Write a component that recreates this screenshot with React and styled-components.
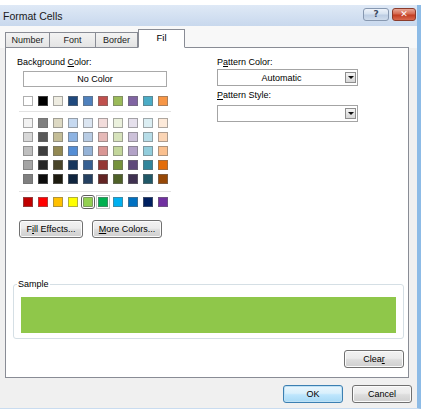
import React from "react";
import styled, { createGlobalStyle, css } from "styled-components";

const GlobalStyle = createGlobalStyle`
  html, body { margin: 0; padding: 0; background: #ffffff; }
  body { font-family: "Liberation Sans", Arial, sans-serif; font-size: 9px; color: #000; }
  * { box-sizing: border-box; }
`;

const Page = styled.div`
  width: 427px;
  height: 415px;
  padding-top: 5px;
  background: #ffffff;
  overflow: hidden;
`;

const Window = styled.div`
  width: 421px;
  background: #f0f0f0;
  border-right: 4px solid #8dbbe6;
  border-bottom: 1px solid #c9dcf0;
  display: flex;
  flex-direction: column;
`;

const TitleBar = styled.div`
  height: 21px;
  background: linear-gradient(#dfe9f6, #c8d8ed);
  display: flex;
  align-items: center;
  justify-content: space-between;
  padding: 0 1px 0 3px;
`;

const Title = styled.div`
  font-size: 10.5px;
  color: #1a1a1a;
`;

const CaptionButtons = styled.div`
  display: flex;
  gap: 3px;
  align-self: flex-start;
  margin-top: 3px;
`;

const CaptionButton = styled.div`
  height: 13px;
  width: ${(p) => p.$w}px;
  border-radius: 3px;
  display: flex;
  align-items: center;
  justify-content: center;
  font-family: "DejaVu Sans", sans-serif;
  font-weight: bold;
  font-size: 9px;
  line-height: 1;
  ${(p) =>
    p.$close
      ? css`
          background: linear-gradient(#e9a898 0%, #d5684f 45%, #c23d22 55%, #d9694e 100%);
          border: 1px solid #8a3b2b;
          color: #ffffff;
        `
      : css`
          background: linear-gradient(#eef3fa 0%, #d6e2f0 45%, #bccde3 55%, #cfdcec 100%);
          border: 1px solid #8798b0;
          color: #3a4a60;
        `}
`;

const Body = styled.div`
  padding: 3px 0 0 5px;
  display: flex;
  flex-direction: column;
  background: linear-gradient(#f8f8f8, #f8f8f8 22px, #f0f0f0 22px);
`;

const TabRow = styled.div`
  display: flex;
  align-items: flex-end;
  height: 19px;
  position: relative;
  z-index: 1;
  margin-bottom: -1px;
`;

const Tab = styled.div`
  width: ${(p) => p.$w}px;
  display: flex;
  align-items: center;
  justify-content: center;
  border: 1px solid #898c95;
  border-left-width: ${(p) => (p.$first || p.$active ? 1 : 0)}px;
  ${(p) =>
    p.$active
      ? css`
          height: 19px;
          background: #ffffff;
          border-bottom-color: #ffffff;
          font-size: 9.5px;
          padding-bottom: 3px;
        `
      : css`
          height: 16px;
          background: linear-gradient(#f3f3f3, #e4e4e4);
          color: #222;
        `}
`;

const Panel = styled.div`
  width: 404px;
  height: 331px;
  background: #ffffff;
  border: 1px solid #898c95;
  display: flex;
  flex-direction: column;
  padding: 8px 4px 8px 0;
`;

const Columns = styled.div`
  display: flex;
`;

const LeftCol = styled.div`
  width: 211px;
  padding-left: 11px;
  display: flex;
  flex-direction: column;
`;

const RightCol = styled.div`
  display: flex;
  flex-direction: column;
`;

const Label = styled.div`
  height: 12px;
  line-height: 12px;
  margin-top: ${(p) => p.$mt || 0}px;
  white-space: nowrap;
`;

const NoColorBox = styled.div`
  margin: 3px 0 0 6px;
  width: 144px;
  height: 16px;
  border: 1px solid #a9a9a9;
  display: flex;
  align-items: center;
  justify-content: center;
`;

const SwatchRow = styled.div`
  display: flex;
  gap: 5px;
  margin-left: 6px;
  margin-top: ${(p) => p.$mt || 0}px;
`;

const Swatch = styled.div`
  width: 10px;
  height: 10px;
  background: ${(p) => p.$c};
  border: 1px solid rgba(110, 110, 110, 0.55);
  ${(p) =>
    p.$selected &&
    css`
      outline: 1px solid #5e5e5e;
      outline-offset: 1px;
      border-radius: 1px;
    `}
  ${(p) =>
    p.$hover &&
    css`
      outline: 1px solid #c4c4c4;
      outline-offset: 1px;
    `}
`;

const Separator = styled.div`
  width: 152px;
  height: 1px;
  background: #e2e2e2;
  margin: ${(p) => p.$mt}px 0 0 2px;
`;

const ButtonRow = styled.div`
  display: flex;
  gap: 9px;
  margin: ${(p) => p.$mt || 0}px 0 0 ${(p) => p.$ml || 0}px;
  justify-content: ${(p) => p.$justify || "flex-start"};
`;

const Button = styled.div`
  width: ${(p) => p.$w}px;
  height: 18px;
  border-radius: 3px;
  display: flex;
  align-items: center;
  justify-content: center;
  white-space: nowrap;
  ${(p) =>
    p.$default
      ? css`
          border: 1px solid #3c7fb1;
          background: linear-gradient(#eaf6fd 0%, #d9f0fc 45%, #bee6fd 55%, #a7d9f5 100%);
          box-shadow: inset 0 0 0 1px #bfe1f5;
        `
      : css`
          border: 1px solid #707070;
          background: linear-gradient(#f2f2f2 0%, #ebebeb 45%, #dddddd 55%, #cfcfcf 100%);
          box-shadow: inset 0 0 0 1px #fbfbfb;
        `}
`;

const Combo = styled.div`
  width: 141px;
  height: 17px;
  margin-top: ${(p) => p.$mt || 0}px;
  border: 1px solid #a4a4a4;
  background: #ffffff;
  display: flex;
  align-items: center;
  padding: 0 1px 0 0;
`;

const ComboText = styled.div`
  flex: 1;
  text-align: center;
`;

const DropButton = styled.div`
  width: 11px;
  height: 11px;
  border: 1px solid #8e8e8e;
  background: linear-gradient(#f4f4f4, #d6d6d6);
  display: flex;
  align-items: center;
  justify-content: center;
`;

const Arrow = styled.div`
  width: 0;
  height: 0;
  border-left: 3px solid transparent;
  border-right: 3px solid transparent;
  border-top: 3px solid #111;
`;

const SampleGroup = styled.fieldset`
  margin: 40px 0 0 7px;
  width: 391px;
  padding: 7px 7px 5px 7px;
  border: 1px solid #d5dfe5;
  border-radius: 3px;
  min-width: 0;
`;

const Legend = styled.legend`
  padding: 0 1px;
  margin-left: -4px;
  line-height: 12px;
  font-size: 9px;
`;

const SampleFill = styled.div`
  height: 36px;
  background: ${(p) => p.$c};
`;

const Footer = styled.div`
  display: flex;
  justify-content: flex-end;
  gap: 9px;
  padding: 7px 5px 5px 0;
`;

const U = styled.span`
  text-decoration: underline;
  text-underline-offset: 1px;
`;

const theme = [
  ["#FFFFFF", "#000000", "#EEECE1", "#1F497D", "#4F81BD", "#C0504D", "#9BBB59", "#8064A2", "#4BACC6", "#F79646"],
];
const tints = [
  ["#F2F2F2", "#7F7F7F", "#DDD9C3", "#C6D9F0", "#DBE5F1", "#F2DCDB", "#EBF1DD", "#E5E0EC", "#DBEEF3", "#FDEADA"],
  ["#D8D8D8", "#595959", "#C4BD97", "#8DB3E2", "#B8CCE4", "#E5B9B7", "#D7E3BC", "#CCC1D9", "#B7DDE8", "#FBD5B5"],
  ["#BFBFBF", "#3F3F3F", "#938953", "#548DD4", "#95B3D7", "#D99694", "#C3D69B", "#B2A2C7", "#92CDDC", "#FAC08F"],
  ["#A5A5A5", "#262626", "#494429", "#17365D", "#366092", "#953734", "#76923C", "#5F497A", "#31859B", "#E36C09"],
  ["#7F7F7F", "#0C0C0C", "#1D1B10", "#0F243E", "#244061", "#632423", "#4F6128", "#3F3151", "#205867", "#974806"],
];
const standard = ["#C00000", "#FF0000", "#FFC000", "#FFFF00", "#92D050", "#00B050", "#00B0F0", "#0070C0", "#002060", "#7030A0"];

export default function App() {
  return (
    <>
      <GlobalStyle />
      <Page>
        <Window>
          <TitleBar>
            <Title>Format Cells</Title>
            <CaptionButtons>
              <CaptionButton $w={26}>?</CaptionButton>
              <CaptionButton $w={24} $close>✕</CaptionButton>
            </CaptionButtons>
          </TitleBar>
          <Body>
            <TabRow>
              <Tab $w={45} $first>Number</Tab>
              <Tab $w={46}>Font</Tab>
              <Tab $w={42}>Border</Tab>
              <Tab $w={47} $active>Fil</Tab>
            </TabRow>
            <Panel>
              <Columns>
                <LeftCol>
                  <Label>
                    Background <U>C</U>olor:
                  </Label>
                  <NoColorBox>No Color</NoColorBox>
                  {theme.map((row, i) => (
                    <SwatchRow key={"t" + i} $mt={9}>
                      {row.map((c, j) => (
                        <Swatch key={j} $c={c} />
                      ))}
                    </SwatchRow>
                  ))}
                  <Separator $mt={5} />
                  {tints.map((row, i) => (
                    <SwatchRow key={"r" + i} $mt={i === 0 ? 6 : 4}>
                      {row.map((c, j) => (
                        <Swatch key={j} $c={c} />
                      ))}
                    </SwatchRow>
                  ))}
                  <Separator $mt={7} />
                  <SwatchRow $mt={5}>
                    {standard.map((c, j) => (
                      <Swatch key={j} $c={c} $selected={j === 4} $hover={j === 5} />
                    ))}
                  </SwatchRow>
                  <ButtonRow $mt={13} $ml={2}>
                    <Button $w={64}>
                      F<U>i</U>ll Effects...
                    </Button>
                    <Button $w={70}>
                      <U>M</U>ore Colors...
                    </Button>
                  </ButtonRow>
                </LeftCol>
                <RightCol>
                  <Label>
                    P<U>a</U>ttern Color:
                  </Label>
                  <Combo $mt={1}>
                    <ComboText>Automatic</ComboText>
                    <DropButton>
                      <Arrow />
                    </DropButton>
                  </Combo>
                  <Label $mt={3}>
                    <U>P</U>attern Style:
                  </Label>
                  <Combo $mt={4}>
                    <ComboText />
                    <DropButton>
                      <Arrow />
                    </DropButton>
                  </Combo>
                </RightCol>
              </Columns>
              <SampleGroup>
                <Legend>Sample</Legend>
                <SampleFill $c="#8fc74a" />
              </SampleGroup>
              <ButtonRow $mt={11} $justify="flex-end">
                <Button $w={60}>
                  Clea<U>r</U>
                </Button>
              </ButtonRow>
            </Panel>
            <Footer>
              <Button $w={60} $default>
                OK
              </Button>
              <Button $w={60}>Cancel</Button>
            </Footer>
          </Body>
        </Window>
      </Page>
    </>
  );
}
